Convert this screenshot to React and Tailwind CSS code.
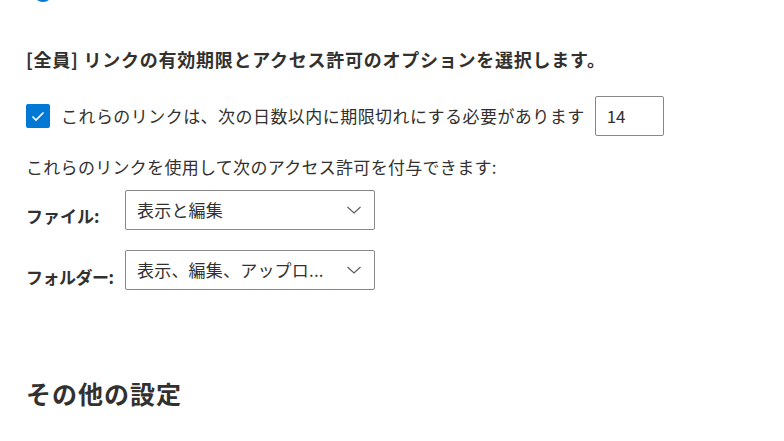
import React from "react";

const font = { fontFamily: '"Noto Sans CJK JP", "Noto Sans", sans-serif' };

function Chevron() {
    return (
        <svg width="16" height="10" viewBox="0 0 16 10" fill="none">
            <path d="M1.5 2 L8 8 L14.5 2" stroke="#605e5c" strokeWidth="1.2" />
        </svg>
    );
}

function Select({ value }) {
    return (
        <div className="flex items-center justify-between w-[250px] h-[40px] border border-[#8a8886] rounded-[2px] pl-[11px] pr-[12px] text-[17px] tracking-[0.2px] text-[#323130]">
            <span>{value}</span>
            <Chevron />
        </div>
    );
}

export default function App() {
    return (
        <div className="w-[784px] h-[441px] overflow-hidden bg-white text-[#323130] pl-[26px]" style={font}>
            <div className="w-[20px] h-[20px] rounded-full bg-[#0078d4] mt-[-18px] ml-[7px]" />

            <h3 className="mt-[44px] text-[18px] font-bold tracking-[0.75px] leading-[26px]">
                [全員] リンクの有効期限とアクセス許可のオプションを選択します。
            </h3>

            <div className="flex items-center mt-[24px]">
                <div className="w-[24px] h-[24px] rounded-[2px] bg-[#0078d4] flex items-center justify-center">
                    <svg width="14" height="11" viewBox="0 0 14 11" fill="none">
                        <path d="M1.5 5.5 L5 9 L12.5 1.5" stroke="white" strokeWidth="1.6" />
                    </svg>
                </div>
                <span className="ml-[11px] text-[17px] tracking-[0.45px]">
                    これらのリンクは、次の日数以内に期限切れにする必要があります
                </span>
                <div className="ml-[10px] w-[69px] h-[40px] border border-[#8a8886] rounded-[2px] flex items-center pl-[11px] text-[17px]">
                    14
                </div>
            </div>

            <p className="mt-[18px] text-[17px] tracking-[0.3px] leading-[26px]">
                これらのリンクを使用して次のアクセス許可を付与できます:
            </p>

            <div className="flex items-center mt-[10px]">
                <span className="w-[99px] pt-[12px] text-[17px] font-bold">ファイル:</span>
                <Select value="表示と編集" />
            </div>

            <div className="flex items-center mt-[20px]">
                <span className="w-[99px] pt-[14px] text-[17px] font-bold tracking-[-0.5px]">フォルダー:</span>
                <Select value="表示、編集、アップロ..." />
            </div>

            <h2 className="mt-[87px] text-[25px] font-bold leading-[32px] tracking-[1px]">その他の設定</h2>
        </div>
    );
}
